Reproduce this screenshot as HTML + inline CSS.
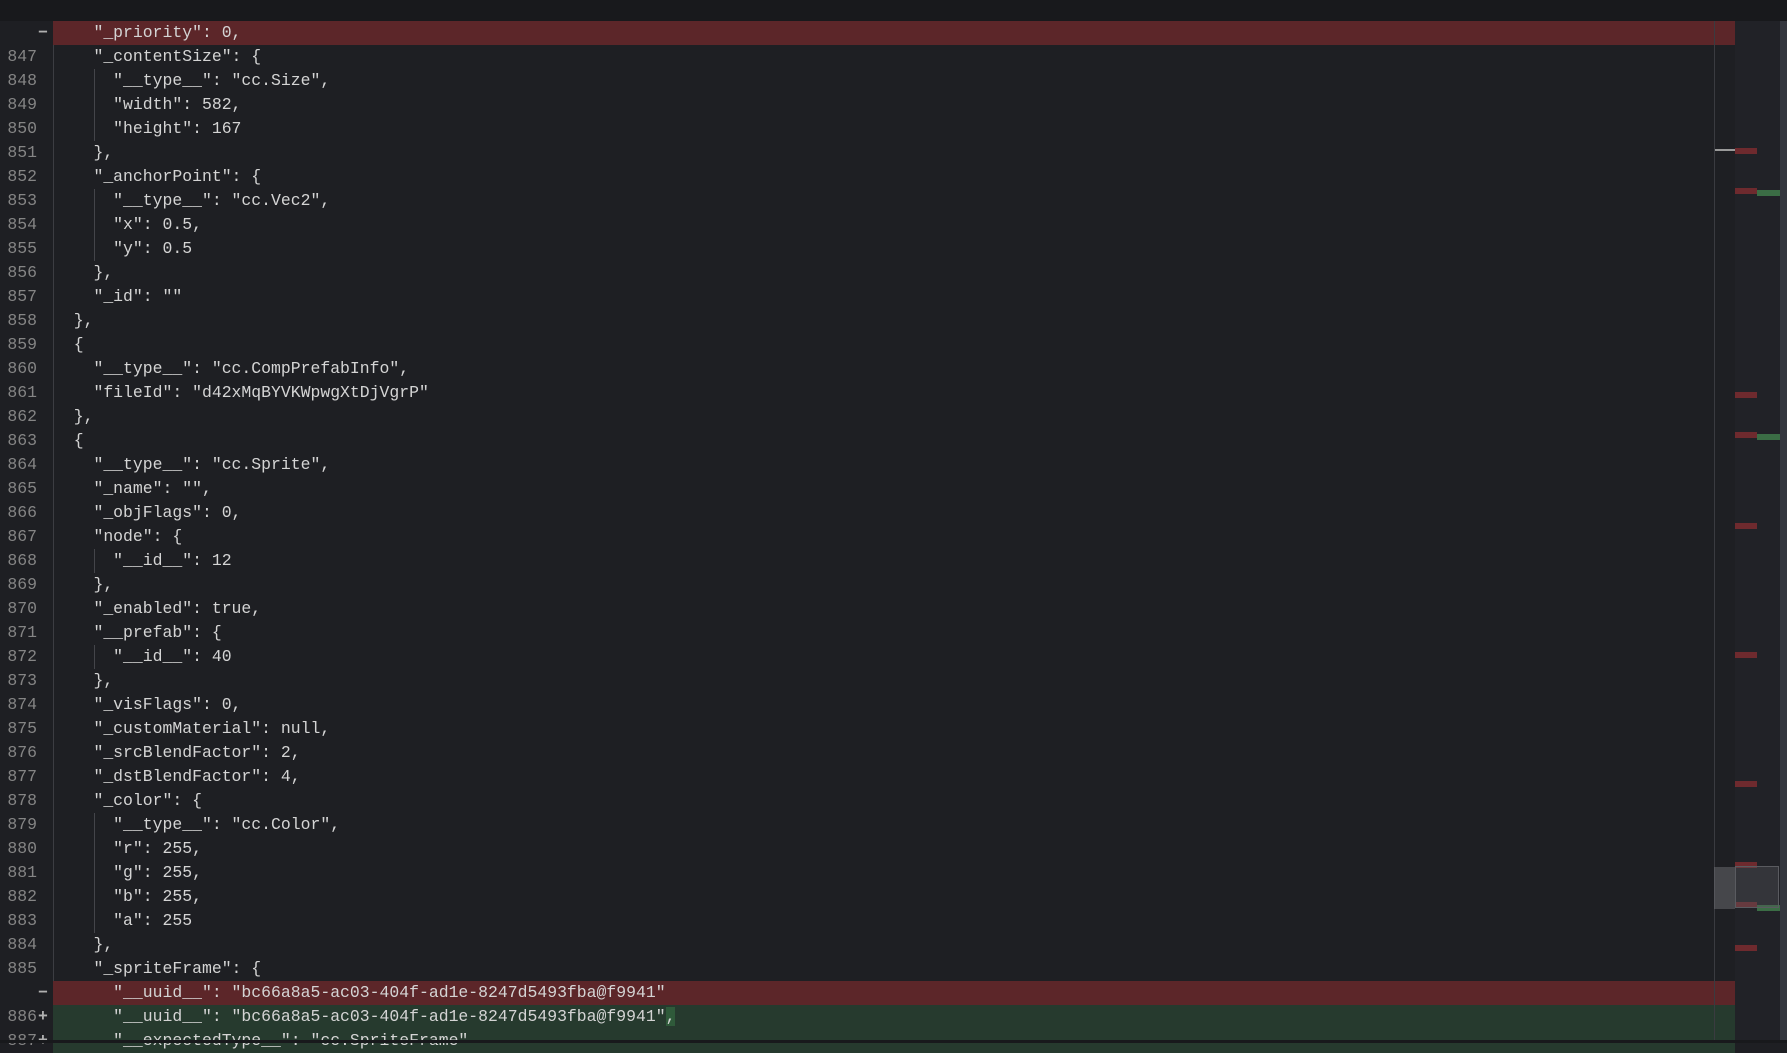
<!DOCTYPE html>
<html><head><meta charset="utf-8"><style>
html,body{margin:0;padding:0;background:#1e1f23;width:1787px;height:1043px;overflow:hidden;font-family:"Liberation Mono",monospace;}
#top{position:absolute;left:0;top:0;width:1787px;height:21px;background:#18191c;}
#code{position:absolute;left:0;top:21px;width:1735px;}
.r{position:relative;height:24px;line-height:24px;font-size:16.45px;white-space:pre;color:#d4d4d4;}
.n{position:absolute;left:0;width:37px;text-align:right;color:#858585;}
.s{position:absolute;left:38px;width:14px;color:#b0b0b0;font-weight:bold;}
.t{position:absolute;left:53px;right:0;top:0;bottom:0;border-left:1px solid #3c3d42;}
.del .t{background:#5c2629;border-left-color:#5c2629;}
.add .t{background:#263a2e;border-left-color:#263a2e;}
.g{position:absolute;left:40px;top:0;width:1px;height:24px;background:#44454a;}
.cm{background:#2f5a3a;}
#vl{position:absolute;left:1714px;top:21px;width:1px;height:1022px;background:#3a3b40;}
#ov{position:absolute;left:1735px;top:21px;width:45px;height:1022px;background:#212227;}
#sb{position:absolute;left:1780px;top:21px;width:7px;height:1022px;background:#34373e;}
.m{position:absolute;height:6px;}
.rm{left:1735px;width:22px;background:#6e2a2e;}
.gm{left:1757px;width:23px;background:#3b6d45;}
</style></head><body>
<div id="top"></div>
<div id="code">
<div class="r del"><span class="n"></span><span class="s">−</span><div class="t">    "_priority": 0,</div></div>
<div class="r"><span class="n">847</span><div class="t">    "_contentSize": {</div></div>
<div class="r"><span class="n">848</span><div class="t"><span class="g"></span>      "__type__": "cc.Size",</div></div>
<div class="r"><span class="n">849</span><div class="t"><span class="g"></span>      "width": 582,</div></div>
<div class="r"><span class="n">850</span><div class="t"><span class="g"></span>      "height": 167</div></div>
<div class="r"><span class="n">851</span><div class="t">    },</div></div>
<div class="r"><span class="n">852</span><div class="t">    "_anchorPoint": {</div></div>
<div class="r"><span class="n">853</span><div class="t"><span class="g"></span>      "__type__": "cc.Vec2",</div></div>
<div class="r"><span class="n">854</span><div class="t"><span class="g"></span>      "x": 0.5,</div></div>
<div class="r"><span class="n">855</span><div class="t"><span class="g"></span>      "y": 0.5</div></div>
<div class="r"><span class="n">856</span><div class="t">    },</div></div>
<div class="r"><span class="n">857</span><div class="t">    "_id": ""</div></div>
<div class="r"><span class="n">858</span><div class="t">  },</div></div>
<div class="r"><span class="n">859</span><div class="t">  {</div></div>
<div class="r"><span class="n">860</span><div class="t">    "__type__": "cc.CompPrefabInfo",</div></div>
<div class="r"><span class="n">861</span><div class="t">    "fileId": "d42xMqBYVKWpwgXtDjVgrP"</div></div>
<div class="r"><span class="n">862</span><div class="t">  },</div></div>
<div class="r"><span class="n">863</span><div class="t">  {</div></div>
<div class="r"><span class="n">864</span><div class="t">    "__type__": "cc.Sprite",</div></div>
<div class="r"><span class="n">865</span><div class="t">    "_name": "",</div></div>
<div class="r"><span class="n">866</span><div class="t">    "_objFlags": 0,</div></div>
<div class="r"><span class="n">867</span><div class="t">    "node": {</div></div>
<div class="r"><span class="n">868</span><div class="t"><span class="g"></span>      "__id__": 12</div></div>
<div class="r"><span class="n">869</span><div class="t">    },</div></div>
<div class="r"><span class="n">870</span><div class="t">    "_enabled": true,</div></div>
<div class="r"><span class="n">871</span><div class="t">    "__prefab": {</div></div>
<div class="r"><span class="n">872</span><div class="t"><span class="g"></span>      "__id__": 40</div></div>
<div class="r"><span class="n">873</span><div class="t">    },</div></div>
<div class="r"><span class="n">874</span><div class="t">    "_visFlags": 0,</div></div>
<div class="r"><span class="n">875</span><div class="t">    "_customMaterial": null,</div></div>
<div class="r"><span class="n">876</span><div class="t">    "_srcBlendFactor": 2,</div></div>
<div class="r"><span class="n">877</span><div class="t">    "_dstBlendFactor": 4,</div></div>
<div class="r"><span class="n">878</span><div class="t">    "_color": {</div></div>
<div class="r"><span class="n">879</span><div class="t"><span class="g"></span>      "__type__": "cc.Color",</div></div>
<div class="r"><span class="n">880</span><div class="t"><span class="g"></span>      "r": 255,</div></div>
<div class="r"><span class="n">881</span><div class="t"><span class="g"></span>      "g": 255,</div></div>
<div class="r"><span class="n">882</span><div class="t"><span class="g"></span>      "b": 255,</div></div>
<div class="r"><span class="n">883</span><div class="t"><span class="g"></span>      "a": 255</div></div>
<div class="r"><span class="n">884</span><div class="t">    },</div></div>
<div class="r"><span class="n">885</span><div class="t">    "_spriteFrame": {</div></div>
<div class="r del"><span class="n"></span><span class="s">−</span><div class="t">      "__uuid__": "bc66a8a5-ac03-404f-ad1e-8247d5493fba@f9941"</div></div>
<div class="r add"><span class="n">886</span><span class="s">+</span><div class="t">      "__uuid__": "bc66a8a5-ac03-404f-ad1e-8247d5493fba@f9941"<span class="cm">,</span></div></div>
<div class="r add"><span class="n">887</span><span class="s">+</span><div class="t">      "__expectedType__": "cc.SpriteFrame"</div></div>
</div>
<div id="vl"></div>
<div id="ov"></div>
<div id="sb"></div>
<div class="m" style="left:1715px;width:20px;top:149px;height:2px;background:#9a9a9a"></div>
<div class="m rm" style="top:148px"></div>
<div class="m rm" style="top:188px"></div>
<div class="m gm" style="top:190px"></div>
<div class="m rm" style="top:392px"></div>
<div class="m rm" style="top:432px"></div>
<div class="m gm" style="top:434px"></div>
<div class="m rm" style="top:523px"></div>
<div class="m rm" style="top:652px"></div>
<div class="m rm" style="top:781px"></div>
<div class="m rm" style="top:862px"></div>
<div class="m rm" style="top:902px"></div>
<div class="m gm" style="top:905px"></div>
<div class="m rm" style="top:945px"></div>
<div style="position:absolute;left:1714px;top:867px;width:21px;height:42px;background:rgba(120,120,125,0.45)"></div>
<div style="position:absolute;left:1735px;top:866px;width:44px;height:42px;background:rgba(90,90,95,0.35);border:1px solid #5a5b60;box-sizing:border-box"></div>
<div style="position:absolute;left:0;top:1040px;width:1787px;height:3px;background:#18191c"></div>
</body></html>
